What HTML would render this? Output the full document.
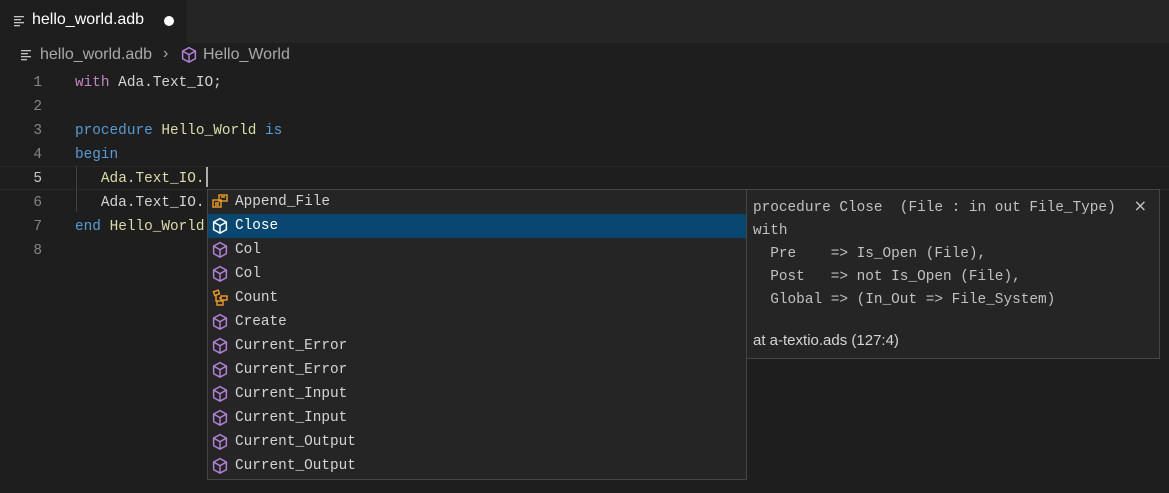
<!DOCTYPE html>
<html><head><meta charset="utf-8"><style>
*{margin:0;padding:0;box-sizing:border-box}
body{width:1169px;height:493px;background:#1e1e1e;overflow:hidden;position:relative;font-family:"Liberation Sans",sans-serif;}
.mono{font-family:"Liberation Mono","DejaVu Sans Mono",monospace;font-size:14.4px;}
.tabbar{position:absolute;left:0;top:0;width:1169px;height:43px;background:#252526}
.tab{position:absolute;left:0;top:0;width:187px;height:43px;background:#1e1e1e;color:#fff;font-size:16px}
.ln{position:absolute;left:0;width:42px;text-align:right;color:#858585}
.code{position:absolute;left:75px;color:#d4d4d4;white-space:pre}
.k{color:#c586c0}.b{color:#569cd6}.y{color:#dcdcaa}
.row{position:absolute;left:0;width:538px;height:24px;line-height:24px;color:#d4d4d4;white-space:pre}
.row span{position:absolute;left:27px}
.row svg{position:absolute;left:3px;top:3px;width:18px;height:18px}
</style></head><body>
<div class="tabbar"></div>
<div class="tab">
 <svg style="position:absolute;left:14px;top:15px" width="12" height="12" viewBox="0 0 12 12" fill="#c5c5c5"><rect x="0" y="1" width="10" height="1.3"/><rect x="0" y="4" width="7" height="1.3"/><rect x="0" y="7" width="10" height="1.3"/><rect x="0" y="10" width="6" height="1.3"/></svg>
 <div style="position:absolute;left:32px;top:11px">hello_world.adb</div>
 <div style="position:absolute;left:164px;top:16px;width:10px;height:10px;border-radius:5px;background:#fff"></div>
</div>
<div style="position:absolute;left:0;top:43px;height:24px;width:1169px;color:#a9a9a9;font-size:16px">
 <svg style="position:absolute;left:21px;top:6px" width="12" height="12" viewBox="0 0 12 12" fill="#c5c5c5"><rect x="0" y="1" width="10" height="1.3"/><rect x="0" y="4" width="7" height="1.3"/><rect x="0" y="7" width="10" height="1.3"/><rect x="0" y="10" width="6" height="1.3"/></svg>
 <div style="position:absolute;left:40px;top:3px">hello_world.adb</div>
 <div style="position:absolute;left:163px;top:2px">›</div>
 <svg style="position:absolute;left:180px;top:3px" width="18" height="18" viewBox="0 0 16 17" fill="none" stroke="#b180d7" stroke-width="1.4"><path d="M8 1.5L14 4.8V12L8 15.3L2 12V4.8Z M2 4.8L8 8.2L14 4.8 M8 8.2V15.3"/></svg>
 <div style="position:absolute;left:203px;top:3px">Hello_World</div>
</div>
<div style="position:absolute;left:0;top:166px;width:1169px;height:24px;border-top:1px solid #282828;border-bottom:1px solid #282828"></div>
<div class="mono">
 <div class="ln" style="top:74px;line-height:18px">1</div>
 <div class="ln" style="top:98px;line-height:18px">2</div>
 <div class="ln" style="top:122px;line-height:18px">3</div>
 <div class="ln" style="top:146px;line-height:18px">4</div>
 <div class="ln" style="top:170px;line-height:18px;color:#c6c6c6">5</div>
 <div class="ln" style="top:194px;line-height:18px">6</div>
 <div class="ln" style="top:218px;line-height:18px">7</div>
 <div class="ln" style="top:242px;line-height:18px">8</div>
 <div class="code" style="top:74px;line-height:18px"><span class="k">with</span> Ada.Text_IO;</div>
 <div class="code" style="top:122px;line-height:18px"><span class="b">procedure</span> <span class="y">Hello_World</span> <span class="b">is</span></div>
 <div class="code" style="top:146px;line-height:18px"><span class="b">begin</span></div>
 <div class="code" style="top:170px;line-height:18px">   <span class="y">Ada.Text_IO.</span></div>
 <div class="code" style="top:194px;line-height:18px">   Ada.Text_IO.</div>
 <div class="code" style="top:218px;line-height:18px"><span class="b">end</span> <span class="y">Hello_World</span></div>
 <div style="position:absolute;left:76px;top:166px;width:1px;height:46px;background:#404040"></div>
 <div style="position:absolute;left:206px;top:167px;width:2px;height:20px;background:#aeafad"></div>

 <div style="position:absolute;left:207px;top:189px;width:540px;height:291px;background:#252526;border:1px solid #454545">
  <div class="row" style="top:0"><svg viewBox="0 0 18 16" fill="none" stroke="#ee9d28" stroke-width="1.4"><rect x="8" y="1" width="8" height="6"/><rect x="2" y="6" width="8" height="7"/><path d="M4 9h4M4 11h4M10 3h4"/></svg><span>Append_File</span></div>
  <div class="row" style="top:24px;background:#094771;color:#fff"><svg viewBox="0 0 16 17" fill="none" stroke="#fff" stroke-width="1.4"><path d="M8 1.5L14 4.8V12L8 15.3L2 12V4.8Z M2 4.8L8 8.2L14 4.8 M8 8.2V15.3"/></svg><span>Close</span></div>
  <div class="row" style="top:48px"><svg viewBox="0 0 16 17" fill="none" stroke="#b180d7" stroke-width="1.4"><path d="M8 1.5L14 4.8V12L8 15.3L2 12V4.8Z M2 4.8L8 8.2L14 4.8 M8 8.2V15.3"/></svg><span>Col</span></div>
  <div class="row" style="top:72px"><svg viewBox="0 0 16 17" fill="none" stroke="#b180d7" stroke-width="1.4"><path d="M8 1.5L14 4.8V12L8 15.3L2 12V4.8Z M2 4.8L8 8.2L14 4.8 M8 8.2V15.3"/></svg><span>Col</span></div>
  <div class="row" style="top:96px"><svg viewBox="0 0 18 16" fill="none" stroke="#ee9d28" stroke-width="1.4"><rect x="3" y="1" width="5" height="4" transform="rotate(-20 5 3)"/><rect x="10" y="6" width="6" height="4"/><rect x="6" y="11" width="6" height="4"/><path d="M5 5v6h1M8 8h2"/></svg><span>Count</span></div>
  <div class="row" style="top:120px"><svg viewBox="0 0 16 17" fill="none" stroke="#b180d7" stroke-width="1.4"><path d="M8 1.5L14 4.8V12L8 15.3L2 12V4.8Z M2 4.8L8 8.2L14 4.8 M8 8.2V15.3"/></svg><span>Create</span></div>
  <div class="row" style="top:144px"><svg viewBox="0 0 16 17" fill="none" stroke="#b180d7" stroke-width="1.4"><path d="M8 1.5L14 4.8V12L8 15.3L2 12V4.8Z M2 4.8L8 8.2L14 4.8 M8 8.2V15.3"/></svg><span>Current_Error</span></div>
  <div class="row" style="top:168px"><svg viewBox="0 0 16 17" fill="none" stroke="#b180d7" stroke-width="1.4"><path d="M8 1.5L14 4.8V12L8 15.3L2 12V4.8Z M2 4.8L8 8.2L14 4.8 M8 8.2V15.3"/></svg><span>Current_Error</span></div>
  <div class="row" style="top:192px"><svg viewBox="0 0 16 17" fill="none" stroke="#b180d7" stroke-width="1.4"><path d="M8 1.5L14 4.8V12L8 15.3L2 12V4.8Z M2 4.8L8 8.2L14 4.8 M8 8.2V15.3"/></svg><span>Current_Input</span></div>
  <div class="row" style="top:216px"><svg viewBox="0 0 16 17" fill="none" stroke="#b180d7" stroke-width="1.4"><path d="M8 1.5L14 4.8V12L8 15.3L2 12V4.8Z M2 4.8L8 8.2L14 4.8 M8 8.2V15.3"/></svg><span>Current_Input</span></div>
  <div class="row" style="top:240px"><svg viewBox="0 0 16 17" fill="none" stroke="#b180d7" stroke-width="1.4"><path d="M8 1.5L14 4.8V12L8 15.3L2 12V4.8Z M2 4.8L8 8.2L14 4.8 M8 8.2V15.3"/></svg><span>Current_Output</span></div>
  <div class="row" style="top:264px"><svg viewBox="0 0 16 17" fill="none" stroke="#b180d7" stroke-width="1.4"><path d="M8 1.5L14 4.8V12L8 15.3L2 12V4.8Z M2 4.8L8 8.2L14 4.8 M8 8.2V15.3"/></svg><span>Current_Output</span></div>
 </div>

 <div style="position:absolute;left:746px;top:189px;width:414px;height:170px;background:#252526;border:1px solid #454545;color:#c0c0c0">
  <div style="position:absolute;left:6px;top:7px;white-space:pre;line-height:23px">procedure Close  (File : in out File_Type)
with
  Pre    => Is_Open (File),
  Post   => not Is_Open (File),
  Global => (In_Out => File_System)</div>
  <div style="position:absolute;right:12px;top:6px;font-family:'DejaVu Sans',sans-serif;font-size:16px;color:#c5c5c5">×</div>
  <div style="position:absolute;left:6px;top:142px;font-family:'Liberation Sans',sans-serif;font-size:15px;color:#d4d4d4">at a-textio.ads (127:4)</div>
 </div>
</div>
</body></html>
